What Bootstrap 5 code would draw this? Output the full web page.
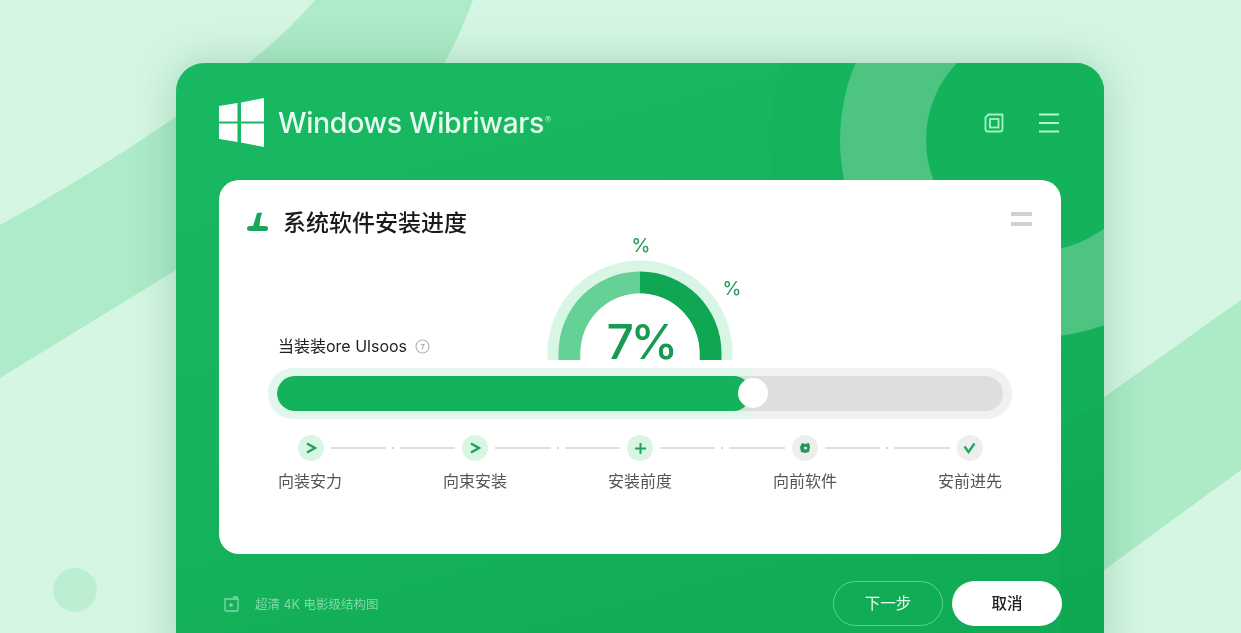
<!DOCTYPE html>
<html lang="zh-CN">
<head>
    <meta charset="UTF-8">
    <meta name="viewport" content="width=device-width, initial-scale=1.0">
    <title>Windows Wibriwars</title>
    <link href="https://cdn.jsdelivr.net/npm/bootstrap@5.3.0/dist/css/bootstrap.min.css" rel="stylesheet">
    <style>
        html, body { height: 100%; overflow: hidden; }
        body {
            background: #d5f6e3;
            font-family: "Inter", "Noto Sans CJK SC", sans-serif;
            padding-top: 63px;
        }
        .bg-art { position: fixed; left: 0; top: 0; z-index: 0; }

        .installer {
            position: relative;
            width: 928px;
            height: 600px;
            margin: 0 0 0 176px;
            border-radius: 28px 28px 0 0;
            background: linear-gradient(165deg, #19b862 0%, #14b25a 60%, #0fa953 100%);
            box-shadow: 0 0 45px rgba(20, 110, 60, .25);
            padding: 0 43px;
            overflow: hidden;
        }
        .ring-art { position: absolute; left: 0; top: 0; }
        .win-head { position: relative; height: 117px; padding-top: 2px; }
        .win-title { font-size: 28.5px; font-weight: 500; color: #e4fbef; letter-spacing: -.35px; margin: 2px 0 0 14px; }
        .win-title sup { font-size: 9px; top: -1.1em; margin-left: 1px; opacity: .7; }
        .head-btns { gap: 35px; margin-right: 2px; }

        .install-card { position: relative; height: 374px; border-radius: 20px; border: 0; padding: 28px 0 0; }
        .card-top { height: 28px; padding: 0 29px 0 28px; }
        .card-name { font-size: 23px; font-weight: 500; color: #1a1a1a; margin-left: 15px; line-height: 28px; padding-top: 2px; }
        .menu-lines { width: 21px; margin-bottom: 0; }
        .menu-lines i { display: block; height: 4px; background: #cfcfcf; margin-bottom: 6px; }

        .gauge-row { display: grid; grid-template-columns: 1fr 210px 1fr; height: 124px; }
        .cur-label { font-size: 16px; color: #222; padding-left: 59px; padding-bottom: 2px; }
        .gauge-row svg { overflow: visible; }
        .gauge-row svg text { font-family: "Inter", sans-serif; }

        .progress-halo {
            margin: 8px 49px 0;
            padding: 8px 9px;
            border-radius: 25px;
            background: linear-gradient(to right, #e2f7eb 65%, #f1f1f1 65%);
            position: relative;
        }
        .install-bar { height: 35px; border-radius: 18px; background: #dedede; }
        .install-bar .progress-bar { background: #14b25a; border-radius: 18px; }
        .bar-knob {
            position: absolute;
            top: 10px;
            width: 30px;
            height: 30px;
            border-radius: 50%;
            background: #fff;
        }

        .step-icons { width: 685px; margin: 16px auto 0; }
        .step-dot { width: 26px; height: 26px; border-radius: 50%; flex-shrink: 0; background: #d9f5e4; }
        .step-dot.later { background: #eeeeee; }
        .step-link { gap: 6px; padding: 0 7px; }
        .step-link b { flex: 1; height: 1.5px; background: #dfdfdf; }
        .step-link u { width: 2px; height: 2px; background: #c9c9c9; border-radius: 50%; }
        .step-names { width: 825px; margin: 8px auto 0; }
        .step-names span { width: 165px; text-align: center; font-size: 16px; color: #555; line-height: 24px; }

        .win-foot { position: relative; height: 71px; padding-top: 27px; }
        .foot-note { font-size: 12.5px; color: #7fd9a8; margin-left: 5px; gap: 16px; }
        .foot-note span { padding-top: 3px; }
        .btn-next, .btn-quit { width: 110px; height: 45px; border-radius: 23px; font-size: 15.5px; padding: 0; }
        .btn-next { border: 1.5px solid #5ed092; color: #e8fbf1; background: transparent; margin-right: 9px; }
        .btn-quit { border: 0; background: #fff; color: #222; font-weight: 500; margin-right: -1px; }
    </style>
</head>
<body>
    <!-- background shapes -->
    <svg class="bg-art" width="1241" height="633" viewBox="0 0 1241 633">
        <path d="M0 225 Q140 148 250 62 Q290 30 315 0 L473 0 Q460 35 445 62 L176 270 L0 378Z" fill="#aeebc8"/>
        <path d="M1100 400 L1241 300 L1241 470 L1100 573Z" fill="#acebc6"/>
        <circle cx="75" cy="590" r="22" fill="#bceed1"/>
    </svg>

    <div class="installer">
        <svg class="ring-art" width="928" height="600" viewBox="176 63 928 600">
            <circle cx="1037" cy="140" r="267" fill="#0f9e4e" opacity=".07"/>
            <circle cx="1037" cy="140" r="197" fill="#4dc482"/>
            <circle cx="1037" cy="140" r="111" fill="#14b25a"/>
            <path d="M1061 428 L1104 398 L1104 663 L1061 663Z" fill="#0a8f45" opacity=".1"/>
        </svg>

        <div class="win-head d-flex align-items-center justify-content-between">
            <div class="d-flex align-items-center">
                <svg width="45" height="49" viewBox="0 0 45 49" fill="#fff">
                    <path d="M0 8 L18.500 5 V23.500 H0Z"/>
                    <path d="M22 4.500 L45 0 V23.500 H22Z"/>
                    <path d="M0 25.500 H18.500 V44 L0 41Z"/>
                    <path d="M22 25.500 H45 V49 L22 44.500Z"/>
                </svg>
                <span class="win-title">Windows Wibriwars<sup>®</sup></span>
            </div>
            <div class="d-flex align-items-center head-btns">
                <svg width="20" height="20" viewBox="0 0 20 20" fill="none" stroke="#a5f3c6" stroke-width="1.800">
                    <path d="M4.500 1.500 H18.500 V16 Q18.500 18.500 16 18.500 H4 Q1.500 18.500 1.500 16 V4.500Z" stroke-linejoin="round"/>
                    <rect x="6" y="6" width="8.500" height="8.500"/>
                </svg>
                <svg width="20" height="20" viewBox="0 0 20 20" stroke="#b0f5cd" stroke-width="2">
                    <path d="M0 1.500 H20 M0 10 H20 M0 18.500 H20"/>
                </svg>
            </div>
        </div>

        <div class="card install-card">
            <div class="card-top d-flex align-items-center justify-content-between">
                <div class="d-flex align-items-center">
                    <svg width="21" height="20" viewBox="0 0 21 20" fill="#17a65a">
                        <path d="M10 1 L15 0.500 Q12.500 8 12.500 14 H18.500 Q21 14 21 16.500 Q21 19 18.500 19 H3 Q0 19 0 16.500 Q0 14 3 14 H6 Q8 8 10 1Z"/>
                    </svg>
                    <span class="card-name">系统软件安装进度</span>
                </div>
                <div class="menu-lines"><i></i><i></i></div>
            </div>

            <div class="gauge-row">
                <div class="cur-label d-flex align-items-end gap-2">
                    <span>当装装ore Ulsoos</span>
                    <svg class="mb-1" width="15" height="15" viewBox="0 0 15 15" fill="none" stroke="#b5b5b5" stroke-width="1.200">
                        <circle cx="7.500" cy="7.500" r="6.500"/>
                        <path d="M5.800 5.500 H9 L7.500 8 V10.500"/>
                    </svg>
                </div>
                <svg width="210" height="124" viewBox="0 0 210 124">
                    <!-- centre of the gauge is x=105, y=117 -->
                    <path d="M12.500 124 V117 A92.500 92.500 0 0 1 197.500 117 V124Z" fill="#d9f5e5"/>
                    <path d="M23.500 124 V117 A81.500 81.500 0 0 1 105 35.500 V57.500 A59.500 59.500 0 0 0 45.500 117 V124Z" fill="#66d196"/>
                    <path d="M105 35.500 A81.500 81.500 0 0 1 186.500 117 V124 H164.500 V117 A59.500 59.500 0 0 0 105 57.500Z" fill="#0fa654"/>
                    <path d="M45.500 124 V117 A59.500 59.500 0 0 1 164.500 117 V124Z" fill="#fff"/>
                    <text x="106" y="16" text-anchor="middle" font-size="19" font-weight="500" fill="#2f9c62">%</text>
                    <text x="197" y="59" text-anchor="middle" font-size="19" font-weight="500" fill="#2f9c62">%</text>
                    <text x="105.500" y="123" text-anchor="middle" font-size="48" font-weight="500" letter-spacing="-3.500" fill="#189a53">7%</text>
                </svg>
                <div></div>
            </div>

            <div class="progress-halo">
                <div class="progress install-bar">
                    <div class="progress-bar" style="width: 65.3%"></div>
                </div>
                <div class="bar-knob" style="left: 470px"></div>
            </div>

            <div class="step-icons d-flex align-items-center">
                <div class="step-dot d-flex align-items-center justify-content-center">
                    <svg width="12" height="12" viewBox="0 0 12 12" fill="none" stroke="#17a65a" stroke-width="2.400"><path d="M2 1.500 L10 6 L2 10.500"/></svg>
                </div>
                <div class="step-link flex-fill d-flex align-items-center"><b></b><u></u><b></b></div>
                <div class="step-dot d-flex align-items-center justify-content-center">
                    <svg width="12" height="12" viewBox="0 0 12 12" fill="none" stroke="#17a65a" stroke-width="2.400"><path d="M2 1.500 L10 6 L2 10.500"/></svg>
                </div>
                <div class="step-link flex-fill d-flex align-items-center"><b></b><u></u><b></b></div>
                <div class="step-dot d-flex align-items-center justify-content-center">
                    <svg width="13" height="13" viewBox="0 0 13 13" fill="none" stroke="#17a65a" stroke-width="2"><path d="M6.500 1 V12 M1 6.500 H12"/></svg>
                </div>
                <div class="step-link flex-fill d-flex align-items-center"><b></b><u></u><b></b></div>
                <div class="step-dot later d-flex align-items-center justify-content-center">
                    <svg width="12" height="12" viewBox="0 0 12 12" fill="#1c9a58"><path d="M3 1 L6 2 L10 1 L11 5 L10 10 L6 11 L2 10 L1 5Z"/><circle cx="6.500" cy="6" r="1.500" fill="#eee"/></svg>
                </div>
                <div class="step-link flex-fill d-flex align-items-center"><b></b><u></u><b></b></div>
                <div class="step-dot later d-flex align-items-center justify-content-center">
                    <svg width="13" height="12" viewBox="0 0 13 12" fill="none" stroke="#17a65a" stroke-width="2.200"><path d="M1.500 4.500 L5.500 10 L11.500 1.500"/></svg>
                </div>
            </div>

            <div class="step-names d-flex">
                <span>向装安力</span>
                <span>向束安装</span>
                <span>安装前度</span>
                <span>向前软件</span>
                <span>安前进先</span>
            </div>
        </div>

        <div class="win-foot d-flex justify-content-between">
            <div class="foot-note d-flex align-items-center align-self-start" style="height: 45px">
                <svg width="15" height="16" viewBox="0 0 15 16" fill="none" stroke="#7fd9a8" stroke-width="1.300">
                    <path d="M1 3 H14 V14 Q14 15 13 15 H2 Q1 15 1 14Z"/>
                    <path d="M9 1 H13 V3"/>
                    <circle cx="7" cy="9" r="1.200" fill="#7fd9a8"/>
                </svg>
                <span>超清 4K 电影级结构图</span>
            </div>
            <div class="d-flex align-self-start">
                <button class="btn btn-next" type="button">下一步</button>
                <button class="btn btn-quit" type="button">取消</button>
            </div>
        </div>
    </div>

    <script src="https://cdn.jsdelivr.net/npm/bootstrap@5.3.0/dist/js/bootstrap.bundle.min.js"></script>
</body>
</html>
